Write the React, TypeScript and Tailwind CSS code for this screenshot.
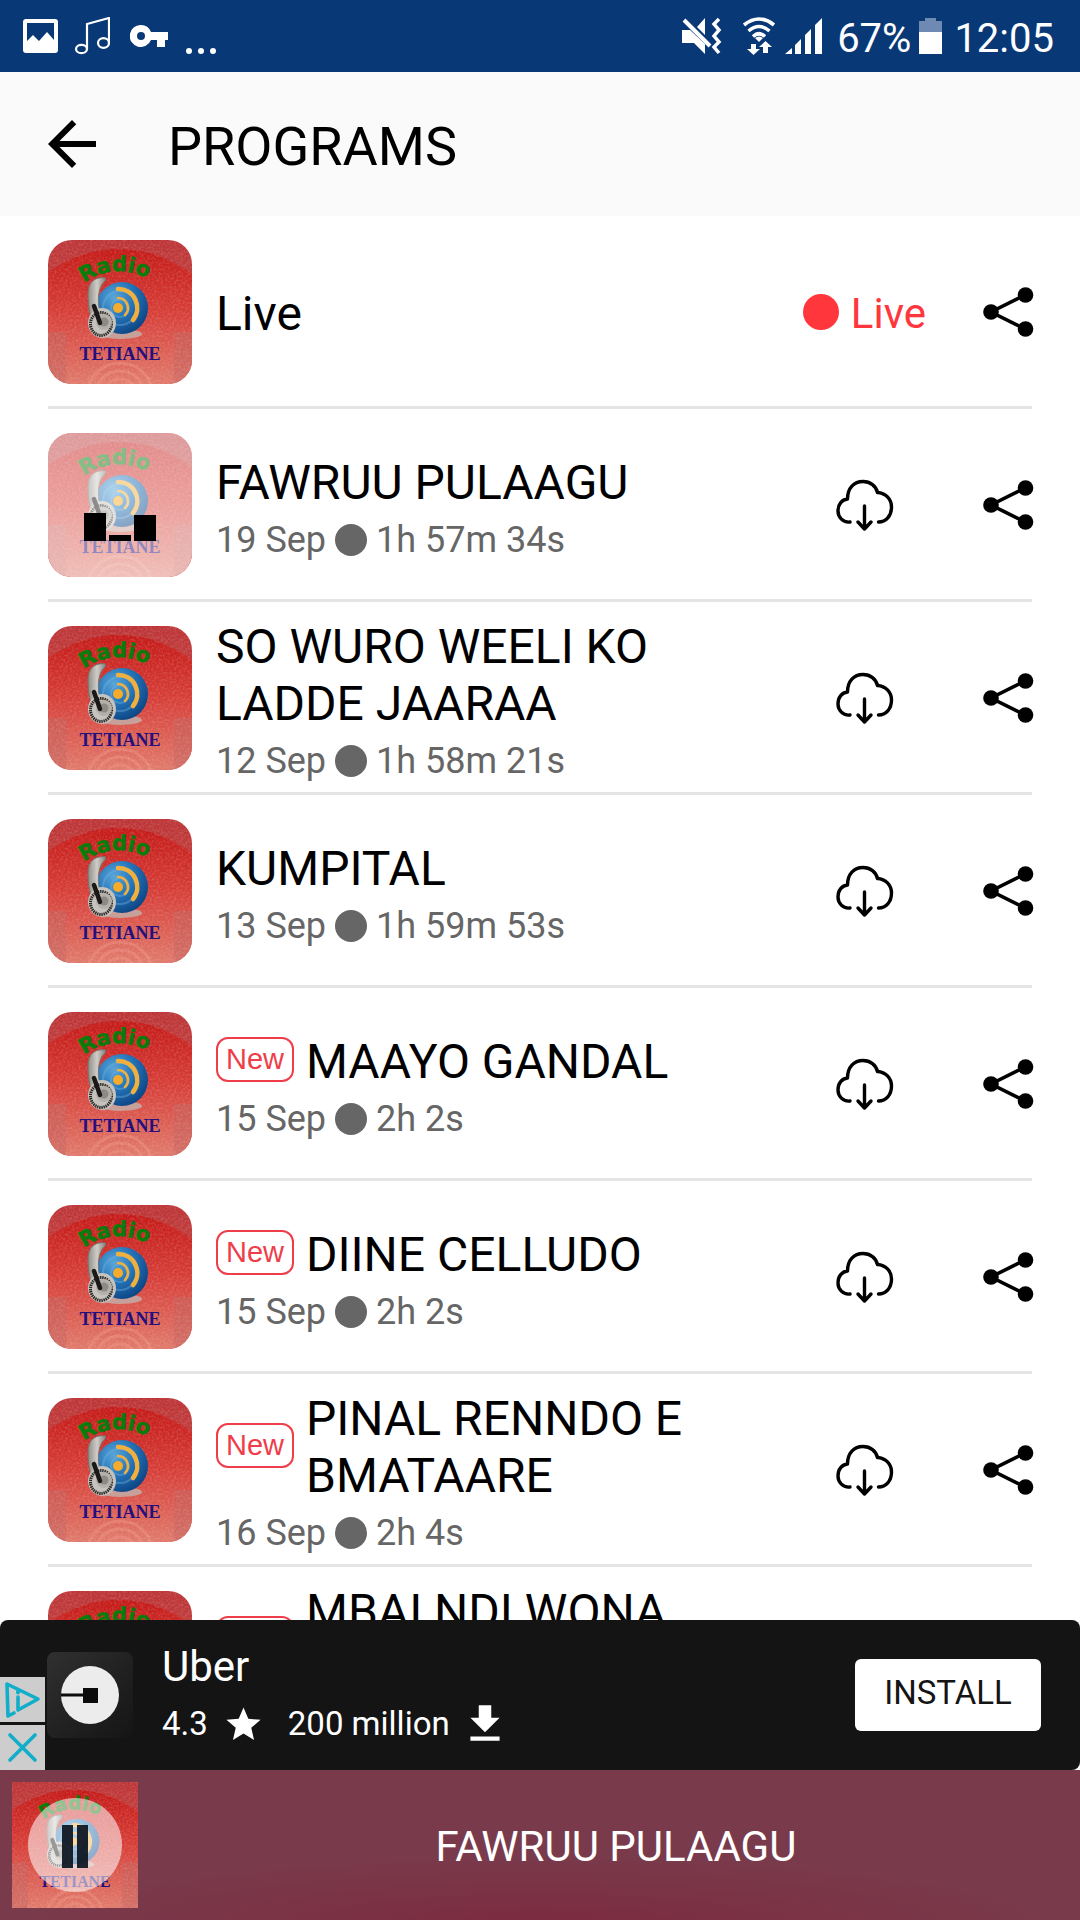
import { useId, type FC } from "react";

type Program = {
  title: string;
  date: string;
  duration: string;
  isNew?: boolean;
  playing?: boolean;
};

const programs: Program[] = [
  { title: "FAWRUU PULAAGU", date: "19 Sep", duration: "1h 57m 34s", playing: true },
  { title: "SO WURO WEELI KO LADDE JAARAA", date: "12 Sep", duration: "1h 58m 21s" },
  { title: "KUMPITAL", date: "13 Sep", duration: "1h 59m 53s" },
  { title: "MAAYO GANDAL", date: "15 Sep", duration: "2h 2s", isNew: true },
  { title: "DIINE CELLUDO", date: "15 Sep", duration: "2h 2s", isNew: true },
  { title: "PINAL RENNDO E BMATAARE", date: "16 Sep", duration: "2h 4s", isNew: true },
  { title: "MBAI NDI WONA\n\u00a0", date: "", duration: "", isNew: true },
];

const Logo: FC<{ className?: string }> = ({ className }) => {
  const id = useId();

  return (
    <svg viewBox="0 0 144 144" className={className} role="img" aria-label="Radio Tetiane">
      <defs>
        <linearGradient id={`${id}-band`} x1="0" y1="0" x2="0" y2="1">
          <stop offset="0" stopColor="#bc3436" />
          <stop offset="1" stopColor="#cf5a54" />
        </linearGradient>
        <linearGradient id={`${id}-disc`} x1="0" y1="0" x2="0" y2="1">
          <stop offset="0" stopColor="#c41a18" />
          <stop offset="0.45" stopColor="#d63c36" />
          <stop offset="1" stopColor="#e07a6c" />
        </linearGradient>
        <radialGradient id={`${id}-ball`} cx="0.35" cy="0.3" r="0.75">
          <stop offset="0" stopColor="#5aa6da" />
          <stop offset="0.5" stopColor="#2474b8" />
          <stop offset="1" stopColor="#0c4484" />
        </radialGradient>
        <linearGradient id={`${id}-metal`} x1="0" y1="0" x2="1" y2="0">
          <stop offset="0" stopColor="#8e8a84" />
          <stop offset="0.5" stopColor="#d0cdc8" />
          <stop offset="1" stopColor="#827e78" />
        </linearGradient>
        <filter id={`${id}-grain`} x="0" y="0" width="100%" height="100%">
          <feTurbulence type="fractalNoise" baseFrequency="0.45" numOctaves="2" />
          <feColorMatrix values="0 0 0 0 1  0 0 0 0 0.75  0 0 0 0 0.7  1.6 0 0 0 -0.6" />
        </filter>
        <path id={`${id}-arc`} d="M36 43 Q69 19 110 44" />
      </defs>
      <rect width="144" height="144" fill={`url(#${id}-band)`} />
      <path d="M0 32Q34 9 70 9Q110 9 144 34V144H0Z" fill={`url(#${id}-disc)`} />
      <path d="M0 92H18V144H0zM126 92H144V144H126z" fill="#c46460" opacity="0.5" />
      <g fill="none" stroke="#ef9a8a" strokeWidth="3" opacity="0.4">
        <circle cx="72" cy="156" r="17" />
        <circle cx="72" cy="156" r="25" />
        <circle cx="72" cy="156" r="33" />
      </g>
      <rect width="144" height="144" filter={`url(#${id}-grain)`} opacity="0.25" />
      <text
        fill="#087d0c"
        stroke="#087d0c"
        strokeWidth="0.5"
        className="font-['DejaVu_Sans'] text-[21px] font-bold"
      >
        <textPath href={`#${id}-arc`}>Radio</textPath>
      </text>
      <ellipse cx="72" cy="94" rx="22" ry="5" fill="#c8a09a" />
      <circle cx="74" cy="68" r="26" fill={`url(#${id}-ball)`} />
      <g fill="none" stroke="#74b4de" strokeWidth="2" opacity="0.4">
        <circle cx="72" cy="68" r="9" />
        <circle cx="72" cy="68" r="17" />
      </g>
      <circle cx="70" cy="68" r="5" fill="#f6ac2a" />
      <g fill="none" stroke="#f0b040" strokeLinecap="round">
        <path d="M70 58a10 10 0 0 1 7 17" strokeWidth="2.600" />
        <path d="M70 49a19 19 0 0 1 15 31" strokeWidth="4.600" />
      </g>
      <path
        d="M58 38C46 36 40 43 40 54C40 64 41 72 44 80L52 72C49 62 50 46 57 41Z"
        fill={`url(#${id}-metal)`}
        stroke="#77736e"
        strokeWidth="1"
      />
      <ellipse cx="54" cy="83" rx="14" ry="15" fill="#c6c2bd" />
      <ellipse
        cx="53"
        cy="84"
        rx="10.500"
        ry="11.500"
        fill="none"
        stroke="#2b2826"
        strokeWidth="3"
        strokeDasharray="1.4 0.8"
      />
      <circle cx="56" cy="82" r="8" fill="#b3afa9" />
      <circle cx="56" cy="82" r="4.500" fill="#8d8983" />
      <path d="M46 66L52 83" stroke="#1b1918" strokeWidth="4.500" strokeLinecap="round" />
      <text x="72" y="120" textAnchor="middle" fill="#23107e" className="font-['Liberation_Serif'] text-[18px] font-bold">
        TETIANE
      </text>
    </svg>
  );
};

const ShareButton = () => (
  <button type="button" aria-label="Share" className="-mr-1 shrink-0">
    <svg viewBox="0 0 56 56" className="size-14">
      <path d="M45 11L11 28L45 45" fill="none" stroke="#000" strokeWidth="3.600" />
      <circle cx="11" cy="28" r="7.800" />
      <circle cx="45.500" cy="11" r="7.800" />
      <circle cx="45.500" cy="45" r="7.800" />
    </svg>
  </button>
);

const DownloadButton = () => (
  <button type="button" aria-label="Download" className="mr-[86px] shrink-0">
    <svg
      viewBox="0 0 60 56"
      className="h-14 w-[60px]"
      fill="none"
      stroke="#000"
      strokeWidth="3.4"
      strokeLinecap="round"
      strokeLinejoin="round"
    >
      <path d="M16 45C9 46 4 40 4 34C4 27 8 22.500 13.500 22C13.500 11 20 4.500 29 4.500C36.500 4.500 42 9 43.500 15.500C51.500 16 57.500 22 57.500 30C57.500 39 52 45 44.500 45" />
      <path d="M30.500 29V52M24 45L30.500 52L37 45" />
    </svg>
  </button>
);

const StatusBar = () => (
  <div className="flex h-[72px] shrink-0 items-center bg-[#093877] pr-[26px] pl-[22px] text-[40px] leading-none text-white">
    <svg viewBox="0 0 36 36" className="size-9" fill="#fff">
      <path
        fillRule="evenodd"
        d="M4 1h29a3 3 0 0 1 3 3v28a3 3 0 0 1-3 3H4a3 3 0 0 1-3-3V4a3 3 0 0 1 3-3zM5 5v18l6-6 6 6 8-9 7 8V5z"
      />
    </svg>
    <svg viewBox="0 0 36 38" className="ml-4 h-[38px] w-9" fill="none" stroke="#fff" strokeWidth="2.2">
      <path d="M13 32V7L35 1V26" />
      <ellipse cx="7.500" cy="32" rx="5.500" ry="4.200" />
      <ellipse cx="29.500" cy="26" rx="5.500" ry="4.800" />
    </svg>
    <svg viewBox="0 0 38 22" className="ml-5 h-[22px] w-[38px]" fill="#fff">
      <path
        fillRule="evenodd"
        d="M11 0a11 11 0 0 1 10 7h17v8h-3v7h-8v-7h-6A11 11 0 1 1 11 0zM11 7a4 4 0 1 0 0 8a4 4 0 0 0 0-8z"
      />
    </svg>
    <svg viewBox="0 0 32 36" className="ml-[17px] h-9 w-8" fill="#fff">
      <circle cx="4" cy="33" r="3" />
      <circle cx="16" cy="33" r="3" />
      <circle cx="28" cy="33" r="3" />
    </svg>

    <svg viewBox="0 0 40 38" className="ml-auto h-[38px] w-10" fill="#fff">
      <path d="M0 13h8l15 14v10l-11-11H0zM15 10l8-9v17z" />
      <path d="M2 3L28 29" stroke="#fff" strokeWidth="4" />
      <path d="M37 2l-5 5 5 6-5 6 5 6-5 5 5 6" fill="none" stroke="#fff" strokeWidth="3.500" />
    </svg>
    <svg viewBox="0 0 34 38" className="ml-5 h-[38px] w-[34px]" fill="none" stroke="#fff" strokeWidth="3.600">
      <path d="M2 8Q17-4 32 8M6.500 14Q17 5 27.500 14M11 19.500Q17 14 23 19.500" />
      <path d="M17 25l-4-4q4-3 8 0z" fill="#fff" stroke="none" />
      <path d="M9 27h5v5h4l-6.500 6L5 32h4zM21 36h5v-6h4l-6.500-6L17 30h4z" fill="#fff" stroke="none" />
    </svg>
    <svg viewBox="0 0 38 36" className="ml-[9px] h-9 w-[38px]" fill="#fff">
      <path d="M0 36h7v-6zM10 36h6V21l-6 6zM20 36h6V11l-6 6zM30 36h7V0l-7 7z" />
    </svg>
    <span className="ml-[14px] pt-1.5">67%</span>
    <svg viewBox="0 0 24 36" className="ml-2 h-9 w-6">
      <path d="M6 0h11v3h6v11H0V3h6z" fill="#6e8ab2" />
      <path d="M0 14h23v22H0z" fill="#fff" />
    </svg>
    <span className="ml-[11px] pt-1.5">12:05</span>
  </div>
);

const ProgramRow: FC<Readonly<{ program: Program }>> = ({ program }) => (
  <li className="flex h-[193px] items-center border-b-3 border-[#e4e4e4] pt-0.5">
    <div className="relative size-36 shrink-0 overflow-hidden rounded-3xl">
      <Logo className="size-full" />
      {program.playing && (
        <div className="absolute inset-0 bg-white/50">
          <svg viewBox="0 0 144 144" className="size-full">
            <path d="M36 80H58V108H36zM61 102H83V108H61zM86 82H108V108H86z" />
          </svg>
        </div>
      )}
    </div>

    <div className="mr-8 ml-6 flex min-w-0 flex-1 flex-col gap-2 pt-1">
      <div className="flex items-center gap-3">
        {program.isNew && (
          <span className="mb-1 flex h-[45px] w-[78px] shrink-0 items-center justify-center rounded-xl border-2 border-[#ef3d49] font-['Liberation_Sans'] text-[29px] leading-none text-[#ef3d49]">
            New
          </span>
        )}
        <h2 className="text-[48px] leading-[57px] whitespace-pre-line">{program.title}</h2>
      </div>
      <p className="flex h-[42px] items-center gap-[9px] text-[36px] text-[#666]">
        <span>{program.date}</span>
        <span className="size-8 rounded-full bg-[#666]" />
        <span>{program.duration}</span>
      </p>
    </div>

    <DownloadButton />
    <ShareButton />
  </li>
);

const AdBanner = () => (
  <aside className="relative flex h-[150px] shrink-0 items-center rounded-lg bg-[#141414] pr-[39px] pl-[47px] text-white">
    <div className="absolute bottom-0 left-0 flex flex-col gap-[3px]">
      <button type="button" aria-label="Ad choices" className="h-[45px] w-[45px] bg-[#cdcdcd]">
        <svg viewBox="0 0 45 45" className="size-full" fill="none" stroke="#10aec8" strokeWidth="3.600" strokeLinejoin="round" strokeLinecap="round">
          <path d="M14 36L8 39L7 7L38 22L18 33V20" />
          <path d="M18 14.500v1" strokeWidth="4" />
        </svg>
      </button>
      <button type="button" aria-label="Close ad" className="h-[45px] w-[45px] bg-[#cdcdcd]">
        <svg viewBox="0 0 45 45" className="size-full" stroke="#10aec8" strokeWidth="3.600" strokeLinecap="round">
          <path d="M10 10L35 35M35 10L10 35" />
        </svg>
      </button>
    </div>

    <svg viewBox="0 0 86 86" className="size-[86px] shrink-0 rounded-lg bg-linear-to-br from-[#303030] to-[#151515]">
      <circle cx="43" cy="43" r="29" fill="#ececec" />
      <path d="M14 41.500H36V36H51V51H36V44.500H14z" fill="#0c0c0c" />
    </svg>
    <div className="ml-[29px] flex flex-1 flex-col gap-3 pb-1">
      <p className="text-[42px] leading-[50px]">Uber</p>
      <p className="flex h-10 items-center text-[33px]">
        <span>4.3</span>
        <svg viewBox="0 0 24 24" className="ml-[15px] size-[41px]" fill="#fff">
          <path d="M12 17.270L18.180 21l-1.640-7.030L22 9.240l-7.190-.610L12 2 9.190 8.630 2 9.240l5.460 4.730L5.820 21z" />
        </svg>
        <span className="ml-6">200 million</span>
        <svg viewBox="0 0 24 24" className="ml-[10px] size-[50px]" fill="#fff">
          <path d="M5 20h14v-2H5zM19 9h-4V3H9v6H5l7 7z" />
        </svg>
      </p>
    </div>
    <button type="button" className="h-[72px] w-[186px] rounded-md bg-white pb-1 text-[33px] text-[#141414]">
      INSTALL
    </button>
  </aside>
);

const Player = () => (
  <footer className="flex h-[150px] shrink-0 items-center bg-[#793b4c] bg-[radial-gradient(ellipse_50%_50%_at_50%_105%,#7c2a3e,#793b4c)] pl-3 text-white">
    <button type="button" aria-label="Pause" className="relative size-[126px] shrink-0">
      <Logo className="size-full" />
      <span className="absolute inset-0 flex items-center justify-center">
        <svg viewBox="0 0 94 94" className="size-[94px] rounded-full bg-white/55">
          <path d="M34 27H45V70H34zM49 27H60V70H49z" fill="#0b141e" fillOpacity="0.92" />
        </svg>
      </span>
    </button>
    <p className="flex-1 pt-0.5 pl-[14px] text-center text-[42px]">FAWRUU PULAAGU</p>
  </footer>
);

export default function App() {
  return (
    <div className="flex h-screen flex-col overflow-hidden bg-white font-[Roboto,sans-serif] text-black">
      <StatusBar />
      <header className="flex h-36 shrink-0 items-center bg-[#fafafa] pl-9">
        <button type="button" aria-label="Back">
          <svg viewBox="0 0 24 24" className="size-[72px]">
            <path d="M20 11H7.830l5.590-5.590L12 4l-8 8 8 8 1.410-1.410L7.830 13H20z" />
          </svg>
        </button>
        <h1 className="ml-[60px] pt-1.5 text-[54px] leading-none">PROGRAMS</h1>
      </header>

      <main className="min-h-0 flex-1 overflow-hidden px-12">
        <ul>
          <li className="flex h-[193px] items-center border-b-3 border-[#e4e4e4] pt-0.5">
            <Logo className="size-36 shrink-0 rounded-3xl" />
            <h2 className="ml-6 flex-1 pt-1 text-[48px]">Live</h2>
            <p className="mr-[54px] flex items-center gap-3 text-[42px] text-[#ff363c]">
              <span className="size-9 rounded-full bg-[#ff363c]" />
              <span className="pt-0.5">Live</span>
            </p>
            <ShareButton />
          </li>
          {programs.map((program) => (
            <ProgramRow key={program.title} program={program} />
          ))}
        </ul>
      </main>

      <AdBanner />
      <Player />
    </div>
  );
}
